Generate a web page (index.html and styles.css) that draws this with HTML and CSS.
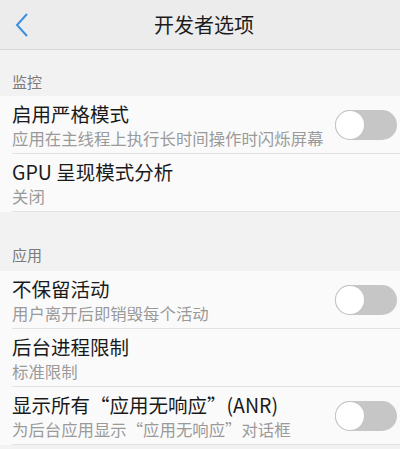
FILE: index.html
```html
<!DOCTYPE html>
<html lang="zh-CN">
<head>
<meta charset="utf-8">
<link rel="stylesheet" href="styles.css">
</head>
<body>
<div class="screen">
  <header class="topbar">
    <svg class="back" width="16" height="26" viewBox="0 0 16 26"><polyline points="12,2 2,13 12,24" fill="none" stroke="#3d8fe0" stroke-width="2"/></svg>
    <div class="title">开发者选项</div>
  </header>

  <div class="section-label first">监控</div>
  <div class="group">
    <div class="row">
      <div class="texts">
        <div class="row-title">启用严格模式</div>
        <div class="row-sub">应用在主线程上执行长时间操作时闪烁屏幕</div>
      </div>
      <div class="toggle"><span class="knob"></span></div>
    </div>
    <div class="row">
      <div class="texts">
        <div class="row-title">GPU 呈现模式分析</div>
        <div class="row-sub">关闭</div>
      </div>
    </div>
  </div>

  <div class="section-label second">应用</div>
  <div class="group">
    <div class="row">
      <div class="texts">
        <div class="row-title">不保留活动</div>
        <div class="row-sub">用户离开后即销毁每个活动</div>
      </div>
      <div class="toggle"><span class="knob"></span></div>
    </div>
    <div class="row">
      <div class="texts">
        <div class="row-title">后台进程限制</div>
        <div class="row-sub">标准限制</div>
      </div>
    </div>
    <div class="row">
      <div class="texts">
        <div class="row-title">显示所有“应用无响应”(ANR)</div>
        <div class="row-sub">为后台应用显示“应用无响应”对话框</div>
      </div>
      <div class="toggle"><span class="knob"></span></div>
    </div>
  </div>
</div>
</body>
</html>
```
FILE: styles.css
```css
html, body {
  margin: 0;
  padding: 0;
  background: #f2f2f2;
}
body {
  font-family: "Noto Sans CJK SC", "Noto Sans", sans-serif;
  width: 400px;
  height: 449px;
  overflow: hidden;
}
.topbar {
  height: 50px;
  background: #ececec;
  border-bottom: 1px solid #d6d6d6;
  box-sizing: border-box;
  position: relative;
  display: flex;
  align-items: center;
  justify-content: center;
  padding-left: 8px;
}
.back {
  position: absolute;
  left: 15px;
  top: 12px;
}
.title {
  font-size: 20px;
  color: #1c1c1c;
  line-height: 28px;
}
.section-label {
  font-size: 15px;
  color: #7a7a7a;
  padding-left: 12px;
  line-height: 22px;
  box-sizing: border-box;
  display: flex;
  align-items: flex-end;
}
.section-label.first {
  height: 46px;
  padding-bottom: 3px;
}
.section-label.second {
  height: 59px;
  padding-bottom: 5px;
}
.group {
  background: #fafafa;
}
.row {
  margin-left: 12px;
  height: 58px;
  box-sizing: border-box;
  border-bottom: 1px solid #e2e2e2;
  display: flex;
  align-items: center;
  padding-right: 3px;
}
.texts {
  flex: 1;
  display: flex;
  flex-direction: column;
}
.row-title {
  font-size: 19.5px;
  line-height: 27px;
  color: #1a1a1a;
}
.row-sub {
  font-size: 16.4px;
  line-height: 23px;
  color: #9a9a9a;
}
.toggle {
  width: 62px;
  height: 30px;
  border-radius: 15px;
  background: #c6c6c6;
  position: relative;
  flex-shrink: 0;
}
.knob {
  position: absolute;
  left: 1px;
  top: 1px;
  width: 28px;
  height: 28px;
  border-radius: 50%;
  background: #ffffff;
  box-shadow: 0 0 0 1px #c4c4c4;
}
```
